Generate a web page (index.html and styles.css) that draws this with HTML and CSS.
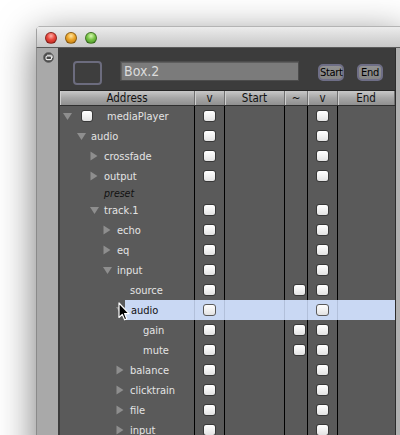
FILE: index.html
```html
<!DOCTYPE html>
<html>
<head>
<meta charset="utf-8">
<link rel="stylesheet" href="styles.css">
</head>
<body>
<div class="window">
  <div class="titlebar">
    <span class="light red"></span>
    <span class="light yellow"></span>
    <span class="light green"></span>
  </div>
  <div class="frame">
    <div class="side">
      <svg class="restore" width="11" height="11" viewBox="0 0 11 11">
        <circle cx="5.5" cy="5.5" r="5" fill="#4a4a4a" stroke="#6a6a6a" stroke-width="0.8"/>
        <rect x="3" y="4" width="5.5" height="3.6" rx="1.2" fill="none" stroke="#f0f0f0" stroke-width="1.1"/>
        <path d="M4 3.2 H8.3 Q9.2 3.2 9.2 4.1 V6" fill="none" stroke="#f0f0f0" stroke-width="0.9"/>
      </svg>
    </div>
    <div class="main">
      <div class="toolbar">
        <div class="sq"></div>
        <div class="field">Box.2</div>
        <div class="btn start">Start</div>
        <div class="btn end">End</div>
      </div>
      <div class="table">
        <div class="thead">
          <div class="th">Address</div>
          <div class="th">v</div>
          <div class="th">Start</div>
          <div class="th">~</div>
          <div class="th">v</div>
          <div class="th">End</div>
        </div>

        <div class="row">
          <div class="td addr l0"><span class="tw"><svg width="9" height="9" viewBox="0 0 9 9"><polygon points="0,1 9,1 4.5,8" class="tri"/></svg></span><span class="cb top"></span><span class="lbl">mediaPlayer</span></div>
          <div class="td"><span class="cb"></span></div><div class="td"></div><div class="td"></div><div class="td"><span class="cb"></span></div><div class="td"></div>
        </div>
        <div class="row">
          <div class="td addr l1"><span class="tw"><svg width="9" height="9" viewBox="0 0 9 9"><polygon points="0,1 9,1 4.5,8" class="tri"/></svg></span><span class="lbl">audio</span></div>
          <div class="td"><span class="cb"></span></div><div class="td"></div><div class="td"></div><div class="td"><span class="cb"></span></div><div class="td"></div>
        </div>
        <div class="row">
          <div class="td addr l2"><span class="tw"><svg width="9" height="10" viewBox="0 0 9 10"><polygon points="0.5,0.5 7.5,5 0.5,9.5" class="tri"/></svg></span><span class="lbl">crossfade</span></div>
          <div class="td"><span class="cb"></span></div><div class="td"></div><div class="td"></div><div class="td"><span class="cb"></span></div><div class="td"></div>
        </div>
        <div class="row">
          <div class="td addr l2"><span class="tw"><svg width="9" height="10" viewBox="0 0 9 10"><polygon points="0.5,0.5 7.5,5 0.5,9.5" class="tri"/></svg></span><span class="lbl">output</span></div>
          <div class="td"><span class="cb"></span></div><div class="td"></div><div class="td"></div><div class="td"><span class="cb"></span></div><div class="td"></div>
        </div>
        <div class="row short">
          <div class="td addr l2"><span class="tw"></span><span class="lbl preset">preset</span></div>
          <div class="td"></div><div class="td"></div><div class="td"></div><div class="td"></div><div class="td"></div>
        </div>
        <div class="row">
          <div class="td addr l2"><span class="tw"><svg width="9" height="9" viewBox="0 0 9 9"><polygon points="0,1 9,1 4.5,8" class="tri"/></svg></span><span class="lbl">track.1</span></div>
          <div class="td"><span class="cb"></span></div><div class="td"></div><div class="td"></div><div class="td"><span class="cb"></span></div><div class="td"></div>
        </div>
        <div class="row">
          <div class="td addr l3"><span class="tw"><svg width="9" height="10" viewBox="0 0 9 10"><polygon points="0.5,0.5 7.5,5 0.5,9.5" class="tri"/></svg></span><span class="lbl">echo</span></div>
          <div class="td"><span class="cb"></span></div><div class="td"></div><div class="td"></div><div class="td"><span class="cb"></span></div><div class="td"></div>
        </div>
        <div class="row">
          <div class="td addr l3"><span class="tw"><svg width="9" height="10" viewBox="0 0 9 10"><polygon points="0.5,0.5 7.5,5 0.5,9.5" class="tri"/></svg></span><span class="lbl">eq</span></div>
          <div class="td"><span class="cb"></span></div><div class="td"></div><div class="td"></div><div class="td"><span class="cb"></span></div><div class="td"></div>
        </div>
        <div class="row">
          <div class="td addr l3"><span class="tw"><svg width="9" height="9" viewBox="0 0 9 9"><polygon points="0,1 9,1 4.5,8" class="tri"/></svg></span><span class="lbl">input</span></div>
          <div class="td"><span class="cb"></span></div><div class="td"></div><div class="td"></div><div class="td"><span class="cb"></span></div><div class="td"></div>
        </div>
        <div class="row">
          <div class="td addr l4"><span class="tw"></span><span class="lbl">source</span></div>
          <div class="td"><span class="cb"></span></div><div class="td"></div><div class="td"><span class="cb"></span></div><div class="td"><span class="cb"></span></div><div class="td"></div>
        </div>
        <div class="row sel">
          <div class="td addr l4"><span class="tw"><svg width="9" height="9" viewBox="0 0 9 9"><polygon points="0,1 9,1 4.5,8" class="tri"/></svg></span><span class="lbl">audio</span></div>
          <div class="td"><span class="cb"></span></div><div class="td"></div><div class="td"></div><div class="td"><span class="cb"></span></div><div class="td"></div>
        </div>
        <div class="row">
          <div class="td addr l5"><span class="tw"></span><span class="lbl">gain</span></div>
          <div class="td"><span class="cb"></span></div><div class="td"></div><div class="td"><span class="cb"></span></div><div class="td"><span class="cb"></span></div><div class="td"></div>
        </div>
        <div class="row">
          <div class="td addr l5"><span class="tw"></span><span class="lbl">mute</span></div>
          <div class="td"><span class="cb"></span></div><div class="td"></div><div class="td"><span class="cb"></span></div><div class="td"><span class="cb"></span></div><div class="td"></div>
        </div>
        <div class="row">
          <div class="td addr l4"><span class="tw"><svg width="9" height="10" viewBox="0 0 9 10"><polygon points="0.5,0.5 7.5,5 0.5,9.5" class="tri"/></svg></span><span class="lbl">balance</span></div>
          <div class="td"><span class="cb"></span></div><div class="td"></div><div class="td"></div><div class="td"><span class="cb"></span></div><div class="td"></div>
        </div>
        <div class="row">
          <div class="td addr l4"><span class="tw"><svg width="9" height="10" viewBox="0 0 9 10"><polygon points="0.5,0.5 7.5,5 0.5,9.5" class="tri"/></svg></span><span class="lbl">clicktrain</span></div>
          <div class="td"><span class="cb"></span></div><div class="td"></div><div class="td"></div><div class="td"><span class="cb"></span></div><div class="td"></div>
        </div>
        <div class="row">
          <div class="td addr l4"><span class="tw"><svg width="9" height="10" viewBox="0 0 9 10"><polygon points="0.5,0.5 7.5,5 0.5,9.5" class="tri"/></svg></span><span class="lbl">file</span></div>
          <div class="td"><span class="cb"></span></div><div class="td"></div><div class="td"></div><div class="td"><span class="cb"></span></div><div class="td"></div>
        </div>
        <div class="row">
          <div class="td addr l4"><span class="tw"><svg width="9" height="10" viewBox="0 0 9 10"><polygon points="0.5,0.5 7.5,5 0.5,9.5" class="tri"/></svg></span><span class="lbl">input</span></div>
          <div class="td"><span class="cb"></span></div><div class="td"></div><div class="td"></div><div class="td"><span class="cb"></span></div><div class="td"></div>
        </div>
      </div>
    </div>
    <div class="rside"></div>
  </div>
</div>
<svg class="cursor" width="13" height="20" viewBox="0 0 13 20">
  <path d="M1 1 L1 15.5 L4.3 12.4 L6.6 17.8 L8.8 16.9 L6.6 11.6 L11 11.6 Z" fill="#000" stroke="#fff" stroke-width="1.2" stroke-linejoin="round"/>
</svg>
</body>
</html>
```

FILE: styles.css
```css
html, body {
  margin: 0;
  height: 435px;
  overflow: hidden;
}
body {
  background: #fff;
  font-family: "Lucida Grande", "DejaVu Sans Condensed", "Liberation Sans", sans-serif;
  position: relative;
}
.window {
  margin: 26px 0 0 36px;
  width: 370px;
  height: 440px;
  border-radius: 5px 5px 0 0;
  overflow: hidden;
  box-shadow: 0 10px 38px rgba(0,0,0,0.55);
  background: #a8a8a8;
}
.titlebar {
  height: 22px;
  box-sizing: border-box;
  padding: 5px 0 0 8px;
  display: flex;
  gap: 8px;
  background: linear-gradient(#ececec, #d2d2d2 70%, #c8c8c8);
  border-top: 1px solid #b4b4b4;
  border-left: 1px solid #a0a0a0;
  border-bottom: 1px solid #5a5a5a;
}
.light {
  width: 12px;
  height: 12px;
  border-radius: 50%;
  box-sizing: border-box;
  border: 1px solid rgba(0,0,0,0.35);
}
.red { background: radial-gradient(circle at 50% 30%, #ffb0a8 0, #e8473d 45%, #b01e16 100%); }
.yellow { background: radial-gradient(circle at 50% 30%, #ffe6a0 0, #eca52a 45%, #b8720a 100%); }
.green { background: radial-gradient(circle at 50% 30%, #d8f8b0 0, #78c447 45%, #3d8a1c 100%); }

.frame {
  display: flex;
  height: 400px;
}
.side {
  width: 22px;
  flex: none;
  border-left: 1px solid #8a8a8a;
  background: #a9a9a9;
  padding: 4px 0 0 6px;
  box-sizing: border-box;
}
.restore { display: block; }
.main {
  width: 337px;
  flex: none;
  background: #3c3c3c;
}
.rside {
  flex: 1;
  background: #b0b0b0;
  border-left: 1px solid #2c2c2c;
}

.toolbar {
  height: 42px;
  box-sizing: border-box;
  padding: 13px 0 0 15px;
  display: flex;
  align-items: flex-start;
}
.sq {
  width: 25px;
  height: 20px;
  border: 2px solid #6c6c7e;
  border-radius: 4px;
  background: #3e3e3e;
}
.field {
  margin-left: 18px;
  width: 179px;
  height: 20px;
  box-sizing: border-box;
  background: #7b7b7b;
  border: 1px solid #4c4c4c;
  box-shadow: inset 1px 1px 0 #5e5e5e;
  color: #dcdcdc;
  font-size: 14px;
  line-height: 18px;
  padding-left: 3px;
}
.btn {
  margin-top: 3px;
  width: 26px;
  height: 17px;
  box-sizing: border-box;
  border: 2px solid #6e6e86;
  border-radius: 5px;
  background: linear-gradient(#929292, #848484);
  color: #000;
  font-size: 11px;
  line-height: 13px;
  text-align: center;
  letter-spacing: -0.3px;
  white-space: nowrap;
}
.start { margin-left: 19px; }
.end { margin-left: 13px; }

.table {
  margin-left: 2px;
  background: #5a5a5a;
}
.thead, .row {
  display: grid;
  grid-template-columns: 135px 30px 60px 23px 30px 57px;
}
.thead {
  height: 16px;
  box-sizing: border-box;
  border-top: 1px solid #262626;
  border-bottom: 1px solid #303030;
  background: linear-gradient(#c8c8c8, #a6a6a6 50%, #909090);
}
.th {
  font-size: 11.5px;
  color: #111;
  text-align: center;
  line-height: 14px;
  border-right: 1px solid #707070;
  box-shadow: inset 1px 0 0 #cfcfcf;
}
.row {
  height: 20px;
}
.row.short { height: 14px; }
.td {
  border-right: 1px solid #000;
  display: flex;
  align-items: center;
  padding-left: 8px;
  min-width: 0;
}
.td:last-child { border-right: none; }
.cb {
  width: 13px;
  height: 12px;
  box-sizing: border-box;
  border: 1px solid #383838;
  border-radius: 3px;
  background: linear-gradient(#ffffff, #f2f2f2 50%, #e2e2e2);
  flex: none;
}
.addr {
  padding-left: 0;
  font-size: 11px;
  color: #e4e4e4;
}
.l0 { padding-left: 3px; }
.l1 { padding-left: 17px; }
.l2 { padding-left: 30px; }
.l3 { padding-left: 43px; }
.l4 { padding-left: 56px; }
.l5 { padding-left: 69px; }
.tw {
  width: 14px;
  flex: none;
  display: flex;
  align-items: center;
}
.tw svg { display: block; }
.tri { fill: #8e8e8e; }
.cb.top { margin-left: 4px; width: 12px; }
.l0 .lbl { margin-left: 14px; }
.lbl { white-space: nowrap; }
.preset {
  font-style: italic;
  color: #111;
  font-size: 10.5px;
}
.sel .td {
  background: #c9d8f3;
  border-right-color: #b2c0da;
}
.sel .td:first-child {
  background: #5a5a5a;
  border-right-color: #b2c0da;
}
.sel .lbl {
  flex: 1;
  align-self: stretch;
  display: flex;
  align-items: center;
  background: #c9d8f3;
  color: #111;
  margin-left: -5px;
  padding-left: 6px;
}
.sel .cb {
  border-color: #5a5a5a;
}
.cursor {
  position: absolute;
  left: 118px;
  top: 302px;
}
```
